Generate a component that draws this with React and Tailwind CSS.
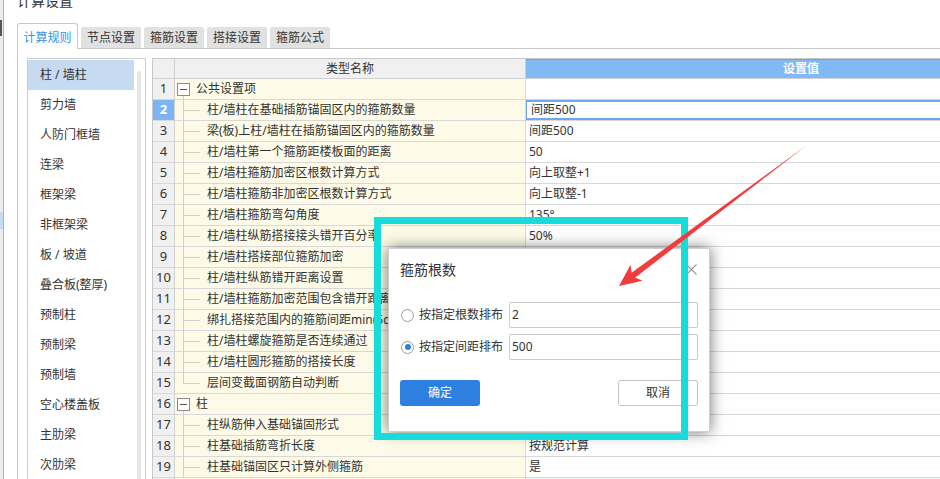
import React from "react";

const listItems = ["柱 / 墙柱", "剪力墙", "人防门框墙", "连梁", "框架梁", "非框架梁", "板 / 坡道", "叠合板(整厚)", "预制柱", "预制梁", "预制墙", "空心楼盖板", "主肋梁", "次肋梁"];

const rows = [
  { name: "公共设置项", group: true, value: "" },
  { name: "柱/墙柱在基础插筋锚固区内的箍筋数量", value: "间距500", sel: true },
  { name: "梁(板)上柱/墙柱在插筋锚固区内的箍筋数量", value: "间距500" },
  { name: "柱/墙柱第一个箍筋距楼板面的距离", value: "50" },
  { name: "柱/墙柱箍筋加密区根数计算方式", value: "向上取整+1" },
  { name: "柱/墙柱箍筋非加密区根数计算方式", value: "向上取整-1" },
  { name: "柱/墙柱箍筋弯勾角度", value: "135°" },
  { name: "柱/墙柱纵筋搭接接头错开百分率", value: "50%" },
  { name: "柱/墙柱搭接部位箍筋加密", value: "" },
  { name: "柱/墙柱纵筋错开距离设置", value: "" },
  { name: "柱/墙柱箍筋加密范围包含错开距离", value: "" },
  { name: "绑扎搭接范围内的箍筋间距min(5d,100)", value: "" },
  { name: "柱/墙柱螺旋箍筋是否连续通过", value: "" },
  { name: "柱/墙柱圆形箍筋的搭接长度", value: "" },
  { name: "层间变截面钢筋自动判断", value: "", last: true },
  { name: "柱", group: true, value: "" },
  { name: "柱纵筋伸入基础锚固形式", value: "" },
  { name: "柱基础插筋弯折长度", value: "按规范计算" },
  { name: "柱基础锚固区只计算外侧箍筋", value: "是" },
];

function NameCell({ r }) {
  return (
    <div className="relative w-[351px] shrink-0 border-r border-[#d8d8d8] bg-[#fdfbe8] flex items-center">
      {r.group ? (
        <>
          <span className="absolute left-[8px] top-[17px] bottom-0 w-px bg-[#cfcfcf]" />
          <div className="ml-[2px] w-[13px] h-[13px] border border-[#8c8c8c] bg-white flex items-center justify-center">
            <span className="w-[7px] h-px bg-[#555]" />
          </div>
          <span className="ml-[6px] text-[12px]">{r.name}</span>
        </>
      ) : (
        <>
          <span className={r.last ? "absolute left-[8px] top-0 h-[10px] w-px bg-[#cfcfcf]" : "absolute left-[8px] top-0 bottom-[-1px] w-px bg-[#cfcfcf]"} />
          <span className="absolute left-[8px] top-[10px] w-[17px] h-px bg-[#cfcfcf]" />
          <span className="pl-[32px] text-[12px] whitespace-nowrap">{r.name}</span>
        </>
      )}
    </div>
  );
}

export default function App() {
  return (
    <div className="relative w-[940px] h-[479px] overflow-hidden bg-white text-[#333] font-['Noto_Sans','Noto_Sans_CJK_SC',sans-serif]">
      <div className="flex h-full">
        <div className="w-[4px] shrink-0 bg-[#ececec] border-r border-[#b4b4b4] flex flex-col">
          <div className="h-[20px]" />
          <div className="h-[16px] w-[2px] bg-[#555]" />
          <div className="h-[176px]" />
          <div className="h-[17px] bg-[#c6dbf1]" />
        </div>
        <div className="flex-1 min-w-0 flex flex-col pl-[13px]">
          <div className="flex h-[23px] shrink-0">
            <span className="-mt-[9px] leading-[20px] text-[14px]">计算设置</span>
          </div>
          <div className="flex items-end h-[26px] shrink-0 border-b border-[#c8c8c8]">
            <div className="w-[61px] h-[26px] -mb-px bg-white border border-b-0 border-[#c8c8c8] rounded-t-[3px] flex items-center justify-center pt-[3px] text-[12px] text-[#3a8ee6]">计算规则</div>
            <div className="ml-[3px] w-[60px] h-[21px] bg-[#e1e1e1] rounded-t-[2px] flex items-center justify-center text-[12px]">节点设置</div>
            <div className="ml-[3px] w-[60px] h-[21px] bg-[#e1e1e1] rounded-t-[2px] flex items-center justify-center text-[12px]">箍筋设置</div>
            <div className="ml-[3px] w-[60px] h-[21px] bg-[#e1e1e1] rounded-t-[2px] flex items-center justify-center text-[12px]">搭接设置</div>
            <div className="ml-[3px] w-[60px] h-[21px] bg-[#e1e1e1] rounded-t-[2px] flex items-center justify-center text-[12px]">箍筋公式</div>
          </div>
          <div className="flex h-[470px] shrink-0 border-l border-[#c8c8c8] pl-[9px] pt-[9px]">
            <div className="w-[119px] shrink-0 border border-[#cfcfcf] flex">
              <div className="w-[106px] flex flex-col pt-px">
                {listItems.map((t, i) => (
                  <div key={t} className={i === 0 ? "h-[30px] shrink-0 flex items-center pl-[12px] text-[12px] bg-[#c6dbf1]" : "h-[30px] shrink-0 flex items-center pl-[12px] text-[12px]"}>{t}</div>
                ))}
              </div>
              <div className="ml-[3px] mt-[12px] w-[4px] bg-[#e6e6e6] rounded-full" />
            </div>
            <div className="ml-[6px] w-[920px] shrink-0 flex flex-col border-l border-t border-[#c8c8c8]">
              <div className="flex h-[20px] shrink-0 border-b border-[#d0d0d0]">
                <div className="w-[22px] shrink-0 border-r border-[#d0d0d0] bg-[#f0f0f0]" />
                <div className="w-[351px] shrink-0 border-r border-[#d0d0d0] bg-[#f0f0f0] flex items-center justify-center text-[12px]">类型名称</div>
                <div className="w-[550px] shrink-0 bg-[#80baf5] border-t border-[#6aa6e8] flex items-center justify-center text-white font-bold text-[12px]">设置值</div>
              </div>
              {rows.map((r, i) => (
                <div key={i} className="flex h-[21px] shrink-0 border-b border-[#d8d8d8]">
                  <div className={r.sel ? "w-[22px] shrink-0 border-r border-[#d0d0d0] bg-[#7db5f2] text-white font-bold flex items-center justify-center text-[13px]" : "w-[22px] shrink-0 border-r border-[#d0d0d0] bg-[#f0f0f0] flex items-center justify-center text-[13px]"}>{i + 1}</div>
                  <NameCell r={r} />
                  {r.sel ? (
                    <div className="w-[550px] shrink-0 -ml-px border-2 border-[#6fa8e6] bg-white flex items-center pl-[4px] text-[12px]">{r.value}</div>
                  ) : (
                    <div className="w-[550px] shrink-0 bg-white flex items-center pl-[3px] text-[12px]">{r.value}</div>
                  )}
                </div>
              ))}
              <div className="flex h-[21px] shrink-0">
                <div className="w-[22px] shrink-0 border-r border-[#d0d0d0] bg-[#f0f0f0]" />
                <div className="w-[351px] shrink-0 border-r border-[#d8d8d8] bg-[#fdfbe8]" />
                <div className="w-[550px] shrink-0 bg-[#eefafa]" />
              </div>
            </div>
          </div>
        </div>
      </div>

      <div className="absolute left-[388px] top-[248px] w-[322px] h-[184px] bg-white border border-[#cfcfcf] shadow-[0_0_14px_rgba(0,0,0,0.55)] px-[11px] pt-[10px] flex flex-col">
        <div className="flex h-[20px] items-center justify-between">
          <span className="text-[14px]">箍筋根数</span>
          <svg width="11" height="11" viewBox="0 0 11 11" className="mr-px">
            <path d="M0.5 0.5 L10.5 10.5 M10.5 0.5 L0.5 10.5" stroke="#9a9a9a" strokeWidth="1.1" fill="none" />
          </svg>
        </div>
        <div className="mt-[23px] flex items-center h-[26px]">
          <span className="ml-px w-[13px] h-[13px] rounded-full border border-[#9a9a9a] bg-white shrink-0" />
          <span className="ml-[5px] w-[90px] shrink-0 text-[12px]">按指定根数排布</span>
          <div className="flex-1 h-[26px] border border-[#cccccc] rounded-[2px] pl-[2px] flex items-center text-[12px]">2</div>
        </div>
        <div className="mt-[6px] flex items-center h-[26px]">
          <span className="ml-px w-[13px] h-[13px] rounded-full border border-[#9a9a9a] bg-white shrink-0 flex items-center justify-center">
            <span className="w-[6px] h-[6px] rounded-full bg-[#2f7fe0]" />
          </span>
          <span className="ml-[5px] w-[90px] shrink-0 text-[12px]">按指定间距排布</span>
          <div className="flex-1 h-[26px] border border-[#cccccc] rounded-[2px] pl-[2px] flex items-center text-[12px]">500</div>
        </div>
        <div className="mt-[20px] flex justify-between">
          <div className="w-[80px] h-[26px] bg-[#2e80e0] rounded-[3px] text-white text-[12px] flex items-center justify-center">确定</div>
          <div className="w-[80px] h-[26px] border border-[#c4c4c4] rounded-[3px] text-[12px] flex items-center justify-center">取消</div>
        </div>
      </div>

      <div className="absolute left-[374px] top-[217px] w-[314px] h-[223px] border-[7px] border-[#17dcdc] pointer-events-none" />

      <svg className="absolute left-0 top-0 pointer-events-none" width="940" height="479" viewBox="0 0 940 479">
        <polygon points="619,286 630.6,264.8 631.6,272.8 807,145 635.2,277.6 642.6,280.8" fill="#f03c3c" />
      </svg>
    </div>
  );
}
